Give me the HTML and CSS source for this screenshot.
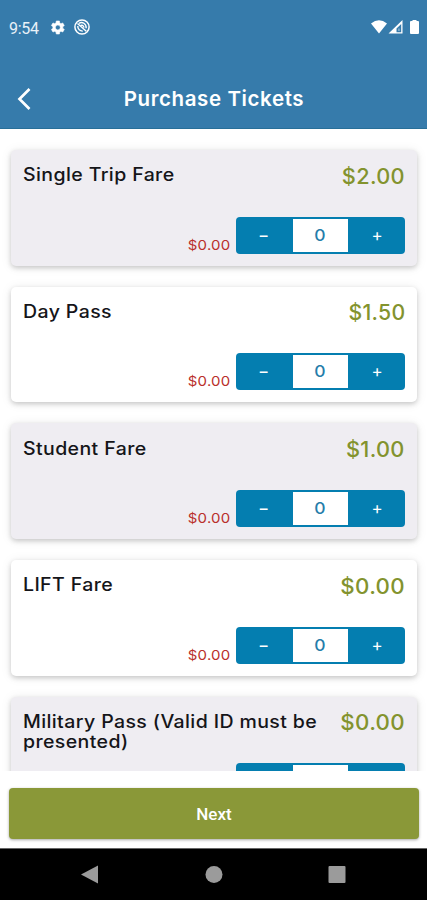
FILE: index.html
```html
<!DOCTYPE html>
<html lang="en">
<head>
<meta charset="utf-8">
<title>Purchase Tickets</title>
<link rel="stylesheet" href="styles.css">
</head>
<body>
<div class="screen">
  <header class="header">
    <div class="status">
      <span class="clock">9:54</span>
      <svg class="gear" width="17" height="17" viewBox="0 0 24 24"><path fill="#fff" stroke="#fff" stroke-width=".8" fill-rule="evenodd" d="M19.4 13c.1-.3.1-.7.1-1s0-.7-.1-1l2.2-1.700-2.200-3.700-2.600 1c-.5-.4-1.100-.7-1.700-1l-.4-2.800h-4.400l-.4 2.800c-.6.3-1.200.6-1.700 1l-2.600-1-2.200 3.700L5.600 11c-.1.300-.1.700-.1 1s0 .700.1 1l-2.200 1.700 2.200 3.700 2.600-1c.5.400 1.100.700 1.700 1l.4 2.800h4.400l.4-2.800c.6-.3 1.200-.6 1.700-1l2.600 1 2.200-3.700zM12.500 15.500a3.500 3.500 0 1 1 0-7 3.500 3.500 0 0 1 0 7z"/></svg>
      <svg class="badge" width="16" height="16" viewBox="0 0 16 16" fill="none" stroke="#fff"><circle cx="8" cy="8" r="7.100" stroke-width="1.500"/><path d="M3.500 4.500 12.300 12.300M5 4.300c3.200-2 7.400.2 7.200 4.900M3.800 7c-.3 3.300 2.300 5.200 5 5.100M6.800 6.500c1.800-.7 3.200.5 3 2.200" stroke-width="1.400"/></svg>
      <svg class="signals" width="50" height="16" viewBox="0 0 50 16"><path fill="#fff" d="M1 4.500Q9-2 17 4.500L9 14.500zM40 3q0-1 1-1h1.500V1h4v1H48q1 0 1 1v11q0 1-1 1h-7q-1 0-1-1z"/><path fill="#fff" fill-rule="evenodd" d="M18.500 14.500 32.500 1v13.500zM26.500 13.200h4.700V5l-4.700 4.500z"/><path fill="#fff" d="M28.300 9.500h1.300v2.500h-1.300z" opacity=".5"/></svg>
    </div>
    <div class="titlebar">
      <svg class="back" width="16" height="24" viewBox="0 0 16 24"><path d="M13.500 2 3.500 12l10 10" fill="none" stroke="#fff" stroke-width="2.700"/></svg>
      <h1 class="title">Purchase Tickets</h1>
    </div>
  </header>
  <main class="list">
    <section class="card tinted">
      <div class="top"><h2 class="name">Single Trip Fare</h2><span class="price">$2.00</span></div>
      <div class="bottom"><span class="total">$0.00</span><div class="stepper"><span class="step">−</span><span class="count"><span class="digit">0</span></span><span class="step">+</span></div></div>
    </section>
    <section class="card">
      <div class="top"><h2 class="name">Day Pass</h2><span class="price narrow">$1.50</span></div>
      <div class="bottom"><span class="total">$0.00</span><div class="stepper"><span class="step">−</span><span class="count"><span class="digit">0</span></span><span class="step">+</span></div></div>
    </section>
    <section class="card tinted">
      <div class="top"><h2 class="name">Student Fare</h2><span class="price">$1.00</span></div>
      <div class="bottom"><span class="total">$0.00</span><div class="stepper"><span class="step">−</span><span class="count"><span class="digit">0</span></span><span class="step">+</span></div></div>
    </section>
    <section class="card">
      <div class="top"><h2 class="name">LIFT Fare</h2><span class="price wide">$0.00</span></div>
      <div class="bottom"><span class="total">$0.00</span><div class="stepper"><span class="step">−</span><span class="count"><span class="digit">0</span></span><span class="step">+</span></div></div>
    </section>
    <section class="card tinted">
      <div class="top"><h2 class="name">Military Pass (Valid ID must be<br>presented)</h2><span class="price wide">$0.00</span></div>
      <div class="bottom"><div class="stepper"><span class="step"></span><span class="count"></span><span class="step"></span></div></div>
    </section>
  </main>
  <footer class="actions"><button class="next">Next</button></footer>
  <nav class="nav">
    <svg width="427" height="51" viewBox="0 0 427 51" fill="#9b9b9b"><path d="M81 25.500 98 16.500v18z"/><circle cx="214" cy="25.500" r="8.500"/><rect x="328.500" y="17" width="17" height="17" rx="1"/></svg>
  </nav>
</div>
</body>
</html>
```
FILE: styles.css
```css
* { box-sizing: border-box; }
body { margin: 0; background: #fff; font-family: Inter, sans-serif; }
.screen { width: 427px; height: 900px; display: flex; flex-direction: column; overflow: hidden; }
.header { height: 129px; flex: none; background: #367bab; border-bottom: 1px solid #286f98; color: #fff; }
.status { display: flex; align-items: center; height: 54px; padding: 0 7px 0 9px; }
.clock { font: 400 16px Roboto, sans-serif; width: 40px; padding-top: 2px; letter-spacing: -.3px; color: #e8f1f8; }
.badge { margin-left: 8px; }
.signals { margin-left: auto; }
.titlebar { height: 74px; padding-top: 8px; display: grid; grid-template-columns: 48px 1fr 48px; align-items: center; }
.back { margin-left: 16px; margin-top: 7px; }
.title { margin: 8px 0 0 1px; font-size: 20.500px; line-height: 28px; font-weight: 600; text-align: center; white-space: nowrap; letter-spacing: .6px; }
.list { flex: none; height: 642px; padding: 21px 10px 0 11px; overflow: hidden; display: flex; flex-direction: column; gap: 21px; }
.card { flex: none; height: 115.700px; padding: 14px 12px 12px; border-radius: 5px; background: #fff; box-shadow: 0 2px 5px rgba(0,0,0,.18), 0 1px 12px rgba(0,0,0,.08); display: flex; flex-direction: column; justify-content: space-between; }
.tinted { background: #efedf2; }
.top { display: flex; justify-content: space-between; height: 40px; }
.name { margin: 1.300px 0 0; font-size: 18px; line-height: 19.500px; font-weight: 500; color: #151519; white-space: nowrap; letter-spacing: .35px; transform: scaleX(1.085); transform-origin: 0 0; }
.price { margin-top: .6px; font-size: 21px; line-height: 24px; font-weight: 500; color: #83932e; letter-spacing: .3px; transform: scaleX(1.035); transform-origin: 100% 0; }
.narrow { transform: scaleX(1.01); }
.wide { transform: scaleX(1.06); }
.bottom { display: flex; justify-content: flex-end; flex: none; height: 37px; }
.total { color: #b92f2b; font-size: 13.500px; line-height: 18px; margin: 19px 6px 0 0; letter-spacing: .2px; transform: scaleX(1.11); transform-origin: 100% 0; }
.stepper { display: grid; grid-template-columns: 57px 55px 57px; width: 169px; height: 37px; padding: 2px 0; border-radius: 4px; background: #047eb0; }
.step, .count { text-align: center; font-size: 17px; line-height: 33px; color: #fff; }
.count { background: #fff; color: #267daa; font-size: 15.500px; font-weight: 500; }
.digit { display: inline-block; transform: scaleX(1.13); }
.step { padding-right: 2px; }
.count + .step { padding: 0 0 0 1px; }
.actions { flex: 1; padding: 17px 8px 0 9px; border-bottom: 1px solid #666; }
.next { display: block; width: 410px; height: 51px; border: 0; border-radius: 4px; background: #8a9838; color: #fff; font: 500 17px Roboto, sans-serif; box-shadow: 0 1px 3px rgba(0,0,0,.35); }
.nav { height: 51px; flex: none; background: #000; }
.nav svg { display: block; }
```
